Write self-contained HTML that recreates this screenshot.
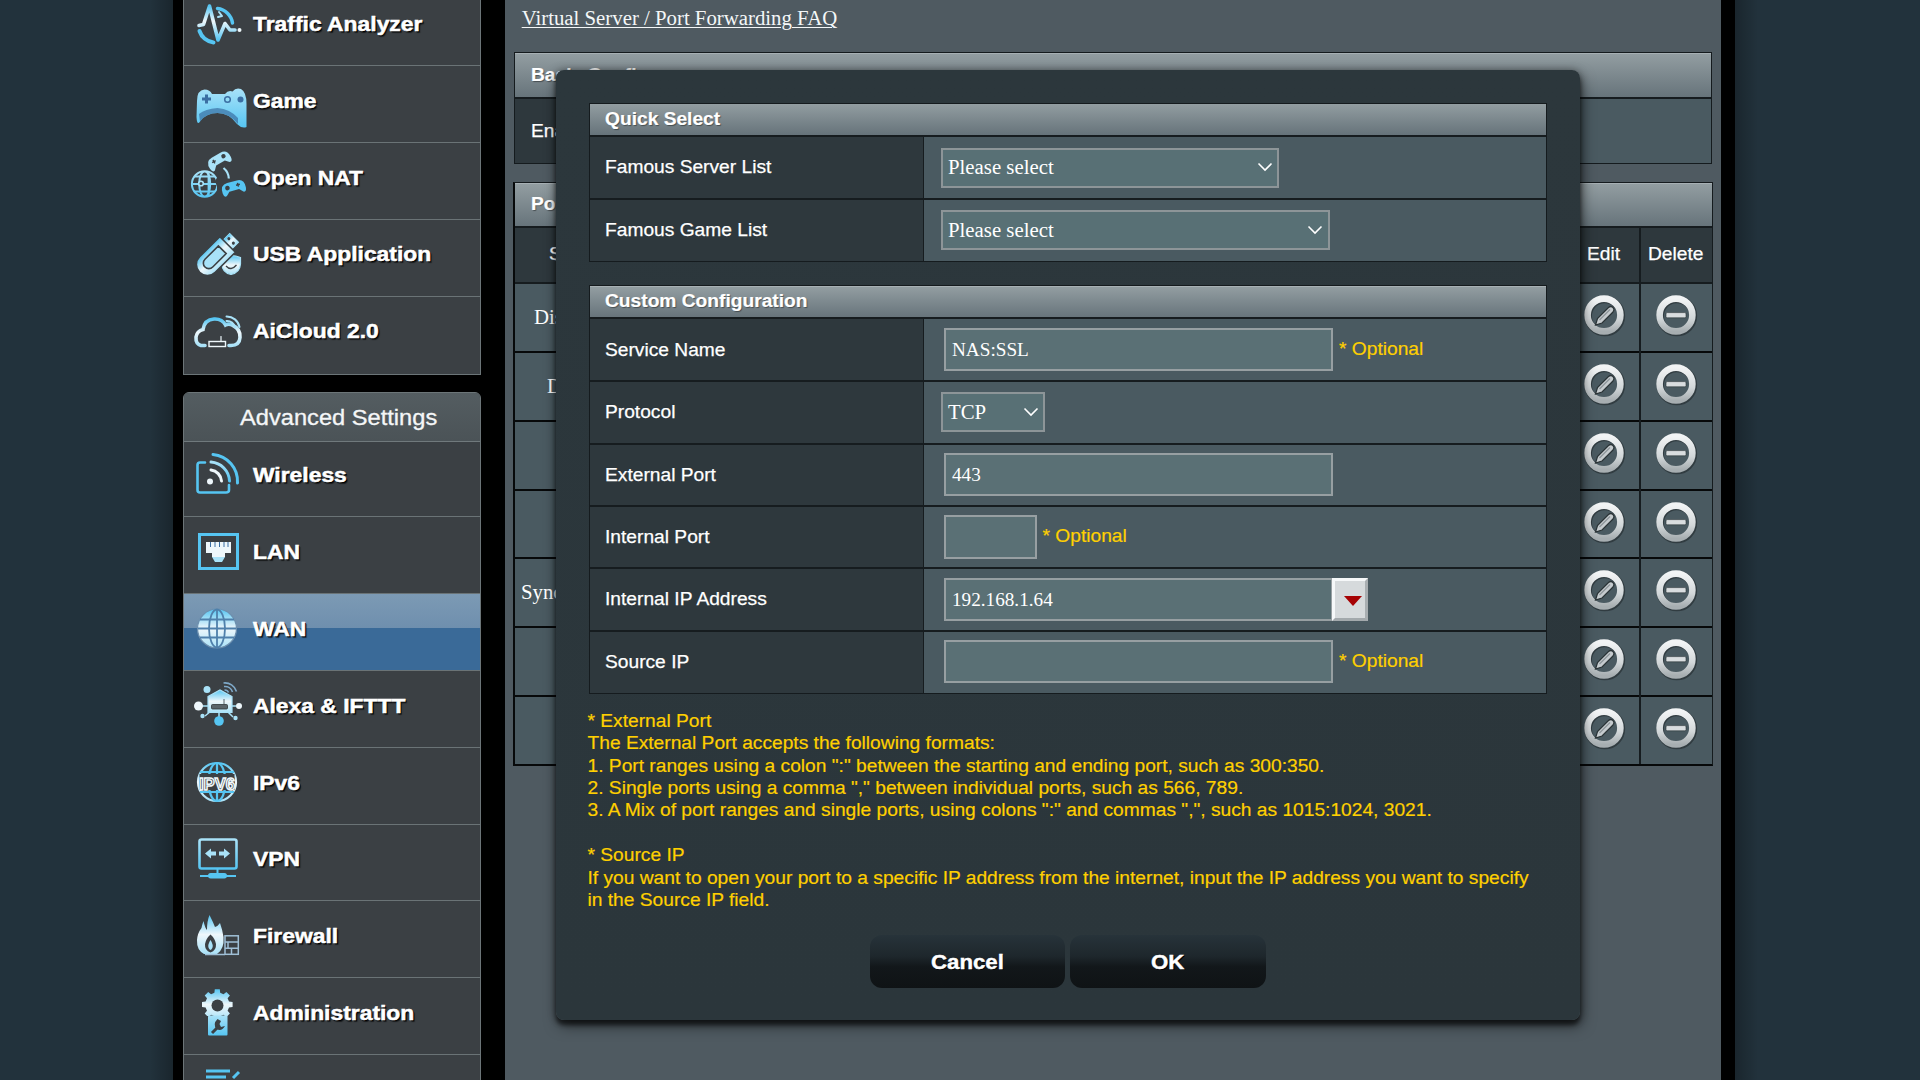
<!DOCTYPE html>
<html><head><meta charset="utf-8"><style>
*{margin:0;padding:0;box-sizing:border-box}
html,body{width:1920px;height:1080px;overflow:hidden}
body{background:#22323c;font-family:"Liberation Sans",sans-serif;position:relative}
.a{position:absolute}
.menu{background:#3b4044;border:1px solid #6c7578}
.sep{position:absolute;left:0;width:296px;height:1px;background:#6a7376}
.mt{position:absolute;left:253px;font-weight:bold;font-size:20.5px;line-height:22px;color:#fff;text-shadow:1px 1px 0 #000,1.5px 1.5px 1px rgba(0,0,0,.6);white-space:nowrap;transform-origin:0 50%;transform:scaleX(1.115);-webkit-text-stroke:0.5px #fff}
.ic{position:absolute;left:8px;width:54px;height:54px}
.hdr{position:absolute;background:linear-gradient(#929da1,#66737a);border-top:1px solid #a7b0b4}
.ht{position:absolute;font-weight:bold;font-size:19.2px;line-height:22px;color:#fff;text-shadow:1px 1px 1px rgba(0,0,0,.4);white-space:nowrap;-webkit-text-stroke:0.2px #fff}
.dk{position:absolute;background:#2e383d}
.lt{position:absolute;background:#4a5a61}
.ln{position:absolute;background:#161c1f}
.lbl{position:absolute;font-size:19.2px;line-height:22px;color:#fff;white-space:nowrap;-webkit-text-stroke:0.25px #fff}
.ser{position:absolute;font-family:"Liberation Serif",serif;font-size:20.8px;line-height:24px;color:#fff;white-space:nowrap}
.box{position:absolute;background:#5a7075;border:2px solid #979fa2}
.opt{position:absolute;color:#ffd000;font-size:19.2px;line-height:22px;white-space:nowrap;-webkit-text-stroke:0.2px #ffd000}
.btn{position:absolute;top:935px;width:195.5px;height:53px;border-radius:12px;background:linear-gradient(#27333a,#1e272c 40%,#12171a 60%,#0f1315);color:#fff;font-weight:bold;font-size:21px;text-align:center;line-height:54.5px;text-shadow:1px 1px 0 #000;-webkit-text-stroke:0.4px #fff}
.btn span{display:inline-block;transform:scaleX(1.06)}
.help{position:absolute;color:#ffd000;font-size:19.2px;line-height:22.4px;white-space:nowrap;-webkit-text-stroke:0.2px #ffd000}
.chev{position:absolute;width:16px;height:10px}
</style></head><body>
<div class="a" style="left:150px;top:0;width:23px;height:1080px;background:linear-gradient(90deg,rgba(0,0,0,0),rgba(0,0,0,.25))"></div>
<div class="a" style="left:1735px;top:0;width:23px;height:1080px;background:linear-gradient(90deg,rgba(0,0,0,.25),rgba(0,0,0,0))"></div>
<div class="a" style="left:173px;top:0;width:1562px;height:1080px;background:#000"></div>
<div class="a menu" style="left:183px;top:-12px;width:298px;height:387px;border-top:none"></div>
<div class="sep" style="left:184px;top:65.1px"></div>
<div class="sep" style="left:184px;top:141.9px"></div>
<div class="sep" style="left:184px;top:218.7px"></div>
<div class="sep" style="left:184px;top:295.5px"></div>
<span class="mt" style="top:13.0px">Traffic Analyzer</span>
<span class="mt" style="top:89.8px">Game</span>
<span class="mt" style="top:166.6px">Open NAT</span>
<span class="mt" style="top:243.4px">USB Application</span>
<span class="mt" style="top:320.2px">AiCloud 2.0</span>
<div class="a menu" style="left:183px;top:391.5px;width:298px;height:720px;border-radius:6px 6px 0 0;overflow:hidden">
<div class="a" style="left:0;top:0;width:296px;height:48px;background:linear-gradient(#545d61,#4b5357)"></div>
<div class="a" style="left:0;top:48px;width:296px;height:1px;background:#70797c"></div>
<span class="a" style="left:56.2px;top:13.6px;font-size:21.5px;line-height:24px;color:#f4f6f7;white-space:nowrap;transform-origin:0 50%;transform:scaleX(1.1);-webkit-text-stroke:0.3px #f4f6f7">Advanced Settings</span>
</div>
<span class="mt" style="top:464.3px">Wireless</span>
<div class="sep" style="left:184px;top:516.3px"></div>
<span class="mt" style="top:541.1px">LAN</span>
<div class="a" style="left:184px;top:594.1px;width:296px;height:76.3px;background:linear-gradient(#7c9ab4,#6f8fae 45%,#3a6a98 45%,#3a6a98)"></div>
<div class="sep" style="left:184px;top:593.1px"></div>
<span class="mt" style="top:617.9px">WAN</span>
<div class="sep" style="left:184px;top:669.9px"></div>
<span class="mt" style="top:694.7px">Alexa &amp; IFTTT</span>
<div class="sep" style="left:184px;top:746.7px"></div>
<span class="mt" style="top:771.5px">IPv6</span>
<div class="sep" style="left:184px;top:823.5px"></div>
<span class="mt" style="top:848.3px">VPN</span>
<div class="sep" style="left:184px;top:900.3px"></div>
<span class="mt" style="top:925.1px">Firewall</span>
<div class="sep" style="left:184px;top:977.1px"></div>
<span class="mt" style="top:1001.9px">Administration</span>
<div class="sep" style="left:184px;top:1053.9px"></div>
<svg class="a" style="left:0;top:0;pointer-events:none" width="490" height="1080" viewBox="0 0 490 1080"><defs><linearGradient id="gw" x1="0" y1="0" x2="0" y2="1"><stop offset="0" stop-color="#56c5f2"/><stop offset=".45" stop-color="#eef7fb"/><stop offset="1" stop-color="#56c5f2"/></linearGradient><linearGradient id="gb" x1="0" y1="0" x2="0" y2="1"><stop offset="0" stop-color="#a9e2f8"/><stop offset="1" stop-color="#56c5f2"/></linearGradient><linearGradient id="gt" x1="0" y1="0" x2="0" y2="1"><stop offset="0" stop-color="#56c5f2"/><stop offset=".5" stop-color="#eef7fb"/><stop offset="1" stop-color="#a9e2f8"/></linearGradient></defs><g fill="none" stroke-linecap="round" stroke-linejoin="round"><path d="M217.5 8.5 A17 17 0 0 1 232.5 23" stroke="#56c5f2" stroke-width="3.5"/><path d="M219 12 L222 16 L218 17" stroke="#a9e2f8" stroke-width="2"/><path d="M199.5 31 A17 17 0 0 0 213.5 42.5" stroke="#56c5f2" stroke-width="4"/><path d="M199 25.5 L203.5 24.5 L209.5 6 L218 40 L225 23.5 L230 30 L235 30" stroke="url(#gw)" stroke-width="3.6"/><circle cx="239.5" cy="30" r="2" fill="#eef7fb" stroke="none"/></g><path d="M197 101 Q197 90 204.5 89.5 Q210 89.5 212 94 L225 94 Q228 90 232.5 91.5 Q236 87 241 89 Q246.5 92 246.5 104 L246.5 127 Q242 129 237 124 Q229 113 217.5 113 Q206 113 200 121.5 Q197 126 196.5 117 Z" fill="url(#gb)"/><path d="M199 114 Q205 109 217.5 108 Q230 109 238 118 L238 124 Q229 113 217.5 113 Q206 113 200 121.5 Z" fill="#3b6fa3" opacity=".7"/><path d="M202 97.5 h3 v-3 h3 v3 h3 v3 h-3 v3 h-3 v-3 h-3 Z" fill="#3b6fa3"/><circle cx="227.5" cy="99.5" r="2.8" fill="none" stroke="#3b6fa3" stroke-width="1.5"/><circle cx="240.5" cy="99.5" r="3" fill="#3b6fa3"/><clipPath id="gclip2"><path d="M185 165 H217.5 V177 Q214 181 217 186 V205 H185 Z"/></clipPath><g fill="none" stroke="url(#gb)" stroke-width="2" clip-path="url(#gclip2)"><circle cx="204.7" cy="184" r="12.8"/><g clip-path="url(#gcirc)"><ellipse cx="204.7" cy="184" rx="5.5" ry="12.8"/><path d="M192 176.5 H217 M192 184 H217 M192 191.5 H217 M208.6 171 V197"/></g></g><clipPath id="gcirc"><circle cx="204.7" cy="184" r="12.5"/></clipPath><circle cx="201" cy="183.5" r="2.3" fill="#3b4044" stroke="#a9e2f8" stroke-width="1.6"/><path d="M223.5 168 Q228.5 172 228.8 178.5" stroke="#a9e2f8" stroke-width="2.2" fill="none"/><g transform="translate(219 160.5) rotate(-30)"><path d="M-12 3 Q-12.5 -6 -5 -6 L5 -6 Q12.5 -6 12 3 Q11.5 8 8.5 6.5 L5 3 L-5 3 L-8.5 6.5 Q-11.5 8 -12 3 Z" fill="#a9e2f8"/><circle cx="6" cy="-1.5" r="2.2" fill="#3b4044"/><path d="M-7 -1.5 h4 M-5 -3.5 v4" stroke="#3b4044" stroke-width="1.4"/></g><g transform="translate(233.5 187.5) rotate(-15)"><path d="M-12 3 Q-12.5 -6 -5 -6 L5 -6 Q12.5 -6 12 3 Q11.5 8 8.5 6.5 L5 3 L-5 3 L-8.5 6.5 Q-11.5 8 -12 3 Z" fill="#56c5f2"/><circle cx="-6" cy="-1" r="2.3" fill="#3b4044"/><path d="M3 -1.5 h4 M5 -3.5 v4" stroke="#3b4044" stroke-width="1.4"/></g><path d="M222 257.5 Q231 253.5 240.5 257.5 L240.5 264 Q240 272.5 231 274.5 Q222 272.5 222 264 Z" fill="url(#gt)" stroke="#a9e2f8" stroke-width="1.2"/><path d="M226 266 Q231 271.5 236.5 265" stroke="#3b4044" stroke-width="1.3" fill="none"/><g transform="translate(-1.5 1.5) rotate(-45 216 256)"><rect x="233" y="248.5" width="12" height="15" fill="#a9e2f8" stroke="#3b4044" stroke-width="1.5"/><rect x="234.2" y="249.7" width="9.6" height="12.6" fill="url(#gt)"/><circle cx="239.5" cy="252.8" r="1.5" fill="#3b4044"/><circle cx="239.5" cy="259.2" r="1.5" fill="#3b4044"/><path d="M206 245 H234.5 V267 H206 A11 11 0 0 1 206 245 Z" fill="url(#gt)" stroke="#3b4044" stroke-width="1.5"/><path d="M208 250.5 H227 V261.5 H208 A5.5 5.5 0 0 1 208 250.5 Z" fill="#a9e2f8" stroke="#3b4044" stroke-width="1.6"/></g><g fill="none" stroke-linecap="round"><path d="M205 345.5 L201 345.5 Q195.5 344 196 337 Q197 331 203 329.5 Q204.5 319.5 214 319 Q222 318.5 225.5 325 Q229 323 233 325.5 Q240.5 329 240 337.5 Q239.5 345.5 231 345.5 L229 345.5" stroke="url(#gt)" stroke-width="3.6"/><path d="M226.5 316.5 A13 13 0 0 1 239.5 327" stroke="#a9e2f8" stroke-width="2"/><path d="M226.5 321 A8 8 0 0 1 235 327.5" stroke="#a9e2f8" stroke-width="2"/><rect x="209" y="341.5" width="16.5" height="5" stroke="#eef7fb" stroke-width="1.4"/><path d="M221 336.5 V341" stroke="#eef7fb" stroke-width="1.2"/></g><g fill="none" stroke-linecap="round"><path d="M205 462.5 H200 Q197.5 462.5 197.5 465 V490 Q197.5 492.5 200 492.5 H226 Q229 492.5 229 490 V485" stroke="#56c5f2" stroke-width="2.6"/><path d="M211 470 A12 12 0 0 1 221.5 481" stroke="#eef7fb" stroke-width="3"/><path d="M211 462 A20 20 0 0 1 229.5 481" stroke="url(#gb)" stroke-width="3"/><path d="M213 454.5 A27 27 0 0 1 237.5 483" stroke="#56c5f2" stroke-width="3"/><circle cx="210" cy="481.5" r="3" fill="#eef7fb" stroke="none"/></g><rect x="199.5" y="534.5" width="38" height="34" fill="none" stroke="#56c5f2" stroke-width="3"/><path d="M206 542 H231 V553 L225 553 V557 L212 557 V553 L206 553 Z" fill="#eef7fb"/><path d="M210.5 542 V547 M215 542 V547 M219.5 542 V547 M224 542 V547 M228 542 V547" stroke="#3b6fa3" stroke-width="1"/><path d="M212 557 H225 L222 562 H215 Z" fill="#a9e2f8"/><circle cx="217" cy="628.5" r="19.5" fill="url(#gt)" stroke="#6d8fae" stroke-width="1.2"/><g fill="none" stroke="#4f80ab" stroke-width="1.8"><ellipse cx="217" cy="628.5" rx="8" ry="19"/><path d="M198 628.5 H236 M200 619.5 H234 M200 637.5 H234 M217 609.5 V647.5"/></g><g stroke="#a9e2f8" stroke-width="1.5" fill="none"><path d="M202 706 H210 M228 706 H236 M205 716 L211 711 M233 717 L227 711 M219 712 V718"/></g><path d="M208 696.5 L220 690 L232 696.5 V712.5 H208 Z" fill="url(#gt)" stroke="#a9e2f8" stroke-width="1.2"/><rect x="211.5" y="704.5" width="16" height="4.5" rx="1" fill="#59646a" stroke="#2f3538" stroke-width=".8"/><path d="M224 699 V704" stroke="#59646a" stroke-width="1"/><circle cx="198.5" cy="706" r="4.5" fill="#eef7fb"/><circle cx="239" cy="706" r="3" fill="#eef7fb"/><circle cx="219" cy="721" r="4.8" fill="#56c5f2"/><circle cx="202.5" cy="716" r="2.2" fill="#a9e2f8"/><circle cx="235.5" cy="718" r="2.2" fill="#a9e2f8"/><circle cx="207" cy="689.5" r="3.5" fill="#a9e2f8"/><path d="M223.5 683 A12 12 0 0 1 236.5 691.5 M224 686.5 A8 8 0 0 1 232.5 692 M224.5 690 A4 4 0 0 1 228.5 692.5" stroke="#7fa9c9" stroke-width="1.6" fill="none"/><g fill="none" stroke-width="2.2"><circle cx="217" cy="782" r="19" stroke="url(#gt)"/><ellipse cx="217" cy="782" rx="8.5" ry="19" stroke="#56c5f2"/><path d="M217 763 V801 M200 772 H234 M200 792 H234" stroke="#56c5f2"/></g><rect x="199.5" y="774" width="35" height="16" fill="#3b4044"/><text x="217" y="789.5" text-anchor="middle" font-family="Liberation Sans" font-weight="bold" font-size="17" fill="#3b4044" stroke="#eef7fb" stroke-width="1.5" textLength="36" lengthAdjust="spacingAndGlyphs">IPV6</text><rect x="199.5" y="839.5" width="37" height="29" rx="2" fill="none" stroke="url(#gb)" stroke-width="2.6"/><path d="M205 853.5 L211 848.5 V851.5 H216 V855.5 H211 V858.5 Z M230 853.5 L224 848.5 V851.5 H219 V855.5 H224 V858.5 Z" fill="#a9e2f8"/><path d="M217.5 869 V875" stroke="#56c5f2" stroke-width="2"/><path d="M200 876 H236" stroke="#56c5f2" stroke-width="2.2"/><rect x="208" y="873" width="19" height="5.5" rx="2.7" fill="#56c5f2"/><path d="M204 954 Q196.5 950 197 940 Q197.5 933 201.5 928 Q202 925 203.5 921 Q205 928 207 930 Q207 921 209.5 915 Q213 922 215 927 Q218 926 220 923 Q222.5 930 223.5 937 Q224.5 949 217 954 Z" fill="url(#gt)"/><path d="M210.5 952.5 Q204.5 950.5 205 944 Q206 938.5 210.5 934.5 Q215 938.5 216 944 Q216.5 950.5 210.5 952.5 Z" fill="#3b4044"/><path d="M210.5 950 Q208 948.5 208.3 945 Q209 942 210.5 940 Q212 942 212.7 945 Q213 948.5 210.5 950 Z" fill="#a9e2f8"/><rect x="224.5" y="935.5" width="14" height="19" fill="#3b4044"/><g fill="none" stroke="#9fbfd6" stroke-width="1.5"><rect x="225" y="935.8" width="13.3" height="18.5"/><path d="M225 942 H238.3 M225 948.3 H238.3 M205 954.5 H225 M228 942 V948.3 M231.5 948.3 V954.3"/></g><clipPath id="gclip"><rect x="195" y="985" width="45" height="31"/></clipPath><path d="M214.4 992.8 L214.8 989.2 L219.8 989.2 L220.2 992.8 L223.5 994.2 L226.4 991.9 L229.9 995.4 L227.6 998.3 L229.0 1001.6 L232.6 1002.0 L232.6 1007.0 L229.0 1007.4 L227.6 1010.7 L229.9 1013.6 L226.4 1017.1 L223.5 1014.8 L220.2 1016.2 L219.8 1019.8 L214.8 1019.8 L214.4 1016.2 L211.1 1014.8 L208.2 1017.1 L204.7 1013.6 L207.0 1010.7 L205.6 1007.4 L202.0 1007.0 L202.0 1002.0 L205.6 1001.6 L207.0 998.3 L204.7 995.4 L208.2 991.9 L211.1 994.2 Z" fill="url(#gt)" clip-path="url(#gclip)"/><circle cx="217.5" cy="1005.5" r="6" fill="#3b4044"/><rect x="208" y="1015.5" width="19.5" height="20" rx="1" fill="url(#gb)"/><path d="M212 1033 L219 1026" stroke="#3b4044" stroke-width="3" fill="none"/><path d="M217.5 1019 Q212.5 1024 216.5 1029 Q221.5 1032 225 1026 L221 1027 L219.5 1024 L221 1021 Z" fill="#3b4044"/><path d="M206 1071 H230 M206 1077 H226 M233 1078 L239 1072" stroke="#56c5f2" stroke-width="3"/></svg>
<div class="a" style="left:505px;top:0;width:1216px;height:1080px;background:#4f5a61"></div>
<div class="a" style="left:521.7px;top:6px;font-family:'Liberation Serif',serif;font-size:20.8px;line-height:24px;color:#f4f7f8;text-decoration:underline;text-decoration-thickness:1.3px;text-underline-offset:1.5px;white-space:nowrap">Virtual Server / Port Forwarding FAQ</div>
<div class="dk" style="left:514px;top:52px;width:1198px;height:112px;background:#4a5a61"></div>
<div class="dk" style="left:514px;top:98px;width:410px;height:66px"></div>
<div class="hdr" style="left:514px;top:52.5px;width:1198px;height:45.5px"></div>
<div class="ln" style="left:514px;top:97px;width:1198px;height:2px"></div>
<span class="ht" style="left:531px;top:64px">Basic Config</span>
<span class="lbl" style="left:531px;top:120px">Enable Port Forwarding</span>
<div class="a" style="left:514px;top:52px;width:1198px;height:112px;border:1px solid #151b1e"></div>
<div class="lt" style="left:514px;top:182px;width:1198px;height:582px"></div>
<div class="hdr" style="left:514px;top:182.5px;width:1198px;height:44.5px"></div>
<div class="dk" style="left:514px;top:227px;width:1198px;height:56px"></div>
<span class="ht" style="left:531px;top:193px">Port Forwarding List</span>
<div class="ln" style="left:514px;top:226px;width:1198px;height:2px"></div>
<span class="lbl" style="left:1587px;top:243px">Edit</span>
<span class="lbl" style="left:1648px;top:243px">Delete</span>
<span class="lbl" style="left:549px;top:243px">Service Name</span>
<div class="ln" style="left:514px;top:282px;width:1198px;height:2px"></div>
<div class="ln" style="left:514px;top:351.0px;width:1198px;height:2px;background:#07090a"></div>
<div class="ln" style="left:514px;top:419.8px;width:1198px;height:2px;background:#07090a"></div>
<div class="ln" style="left:514px;top:488.6px;width:1198px;height:2px;background:#07090a"></div>
<div class="ln" style="left:514px;top:557.4px;width:1198px;height:2px;background:#07090a"></div>
<div class="ln" style="left:514px;top:626.2px;width:1198px;height:2px;background:#07090a"></div>
<div class="ln" style="left:514px;top:695.0px;width:1198px;height:2px;background:#07090a"></div>
<div class="ln" style="left:1639px;top:227px;width:1.5px;height:537px"></div>
<div class="ln" style="left:1569px;top:227px;width:1.5px;height:537px"></div>
<svg width="0" height="0" style="position:absolute"><defs><linearGradient id="rg" x1="0" y1="0" x2="0" y2="1"><stop offset="0" stop-color="#f2f4f5"/><stop offset=".6" stop-color="#d3d8da"/><stop offset="1" stop-color="#a7aeb1"/></linearGradient></defs></svg>
<svg class="a" style="left:1580px;top:291.1px" width="50" height="50" viewBox="0 0 50 50"><circle cx="24.8" cy="25" r="16.6" fill="none" stroke="#1d2528" stroke-opacity=".55" stroke-width="7.5"/><circle cx="24" cy="24" r="16.4" fill="none" stroke="url(#rg)" stroke-width="6.6"/><path d="M15.5 34 L17.5 27.5 L28.5 16.5 Q31 14.5 33 16.5 Q35 18.5 33 21 L22 32 Z" fill="#c5cbce" stroke="#2a3336" stroke-width="1.2"/><path d="M19.5 29 L30 18.5" stroke="#8d9599" stroke-width="1.2"/></svg>
<svg class="a" style="left:1651.6px;top:291.1px" width="50" height="50" viewBox="0 0 50 50"><circle cx="24.8" cy="25" r="16.6" fill="none" stroke="#1d2528" stroke-opacity=".55" stroke-width="7.5"/><circle cx="24" cy="24" r="16.4" fill="none" stroke="url(#rg)" stroke-width="6.6"/><rect x="14" y="21.6" width="20" height="5.2" rx="1.2" fill="#d9dddf" stroke="#2a3336" stroke-width=".6"/></svg>
<svg class="a" style="left:1580px;top:359.9px" width="50" height="50" viewBox="0 0 50 50"><circle cx="24.8" cy="25" r="16.6" fill="none" stroke="#1d2528" stroke-opacity=".55" stroke-width="7.5"/><circle cx="24" cy="24" r="16.4" fill="none" stroke="url(#rg)" stroke-width="6.6"/><path d="M15.5 34 L17.5 27.5 L28.5 16.5 Q31 14.5 33 16.5 Q35 18.5 33 21 L22 32 Z" fill="#c5cbce" stroke="#2a3336" stroke-width="1.2"/><path d="M19.5 29 L30 18.5" stroke="#8d9599" stroke-width="1.2"/></svg>
<svg class="a" style="left:1651.6px;top:359.9px" width="50" height="50" viewBox="0 0 50 50"><circle cx="24.8" cy="25" r="16.6" fill="none" stroke="#1d2528" stroke-opacity=".55" stroke-width="7.5"/><circle cx="24" cy="24" r="16.4" fill="none" stroke="url(#rg)" stroke-width="6.6"/><rect x="14" y="21.6" width="20" height="5.2" rx="1.2" fill="#d9dddf" stroke="#2a3336" stroke-width=".6"/></svg>
<svg class="a" style="left:1580px;top:428.7px" width="50" height="50" viewBox="0 0 50 50"><circle cx="24.8" cy="25" r="16.6" fill="none" stroke="#1d2528" stroke-opacity=".55" stroke-width="7.5"/><circle cx="24" cy="24" r="16.4" fill="none" stroke="url(#rg)" stroke-width="6.6"/><path d="M15.5 34 L17.5 27.5 L28.5 16.5 Q31 14.5 33 16.5 Q35 18.5 33 21 L22 32 Z" fill="#c5cbce" stroke="#2a3336" stroke-width="1.2"/><path d="M19.5 29 L30 18.5" stroke="#8d9599" stroke-width="1.2"/></svg>
<svg class="a" style="left:1651.6px;top:428.7px" width="50" height="50" viewBox="0 0 50 50"><circle cx="24.8" cy="25" r="16.6" fill="none" stroke="#1d2528" stroke-opacity=".55" stroke-width="7.5"/><circle cx="24" cy="24" r="16.4" fill="none" stroke="url(#rg)" stroke-width="6.6"/><rect x="14" y="21.6" width="20" height="5.2" rx="1.2" fill="#d9dddf" stroke="#2a3336" stroke-width=".6"/></svg>
<svg class="a" style="left:1580px;top:497.5px" width="50" height="50" viewBox="0 0 50 50"><circle cx="24.8" cy="25" r="16.6" fill="none" stroke="#1d2528" stroke-opacity=".55" stroke-width="7.5"/><circle cx="24" cy="24" r="16.4" fill="none" stroke="url(#rg)" stroke-width="6.6"/><path d="M15.5 34 L17.5 27.5 L28.5 16.5 Q31 14.5 33 16.5 Q35 18.5 33 21 L22 32 Z" fill="#c5cbce" stroke="#2a3336" stroke-width="1.2"/><path d="M19.5 29 L30 18.5" stroke="#8d9599" stroke-width="1.2"/></svg>
<svg class="a" style="left:1651.6px;top:497.5px" width="50" height="50" viewBox="0 0 50 50"><circle cx="24.8" cy="25" r="16.6" fill="none" stroke="#1d2528" stroke-opacity=".55" stroke-width="7.5"/><circle cx="24" cy="24" r="16.4" fill="none" stroke="url(#rg)" stroke-width="6.6"/><rect x="14" y="21.6" width="20" height="5.2" rx="1.2" fill="#d9dddf" stroke="#2a3336" stroke-width=".6"/></svg>
<svg class="a" style="left:1580px;top:566.3px" width="50" height="50" viewBox="0 0 50 50"><circle cx="24.8" cy="25" r="16.6" fill="none" stroke="#1d2528" stroke-opacity=".55" stroke-width="7.5"/><circle cx="24" cy="24" r="16.4" fill="none" stroke="url(#rg)" stroke-width="6.6"/><path d="M15.5 34 L17.5 27.5 L28.5 16.5 Q31 14.5 33 16.5 Q35 18.5 33 21 L22 32 Z" fill="#c5cbce" stroke="#2a3336" stroke-width="1.2"/><path d="M19.5 29 L30 18.5" stroke="#8d9599" stroke-width="1.2"/></svg>
<svg class="a" style="left:1651.6px;top:566.3px" width="50" height="50" viewBox="0 0 50 50"><circle cx="24.8" cy="25" r="16.6" fill="none" stroke="#1d2528" stroke-opacity=".55" stroke-width="7.5"/><circle cx="24" cy="24" r="16.4" fill="none" stroke="url(#rg)" stroke-width="6.6"/><rect x="14" y="21.6" width="20" height="5.2" rx="1.2" fill="#d9dddf" stroke="#2a3336" stroke-width=".6"/></svg>
<svg class="a" style="left:1580px;top:635.1px" width="50" height="50" viewBox="0 0 50 50"><circle cx="24.8" cy="25" r="16.6" fill="none" stroke="#1d2528" stroke-opacity=".55" stroke-width="7.5"/><circle cx="24" cy="24" r="16.4" fill="none" stroke="url(#rg)" stroke-width="6.6"/><path d="M15.5 34 L17.5 27.5 L28.5 16.5 Q31 14.5 33 16.5 Q35 18.5 33 21 L22 32 Z" fill="#c5cbce" stroke="#2a3336" stroke-width="1.2"/><path d="M19.5 29 L30 18.5" stroke="#8d9599" stroke-width="1.2"/></svg>
<svg class="a" style="left:1651.6px;top:635.1px" width="50" height="50" viewBox="0 0 50 50"><circle cx="24.8" cy="25" r="16.6" fill="none" stroke="#1d2528" stroke-opacity=".55" stroke-width="7.5"/><circle cx="24" cy="24" r="16.4" fill="none" stroke="url(#rg)" stroke-width="6.6"/><rect x="14" y="21.6" width="20" height="5.2" rx="1.2" fill="#d9dddf" stroke="#2a3336" stroke-width=".6"/></svg>
<svg class="a" style="left:1580px;top:703.9px" width="50" height="50" viewBox="0 0 50 50"><circle cx="24.8" cy="25" r="16.6" fill="none" stroke="#1d2528" stroke-opacity=".55" stroke-width="7.5"/><circle cx="24" cy="24" r="16.4" fill="none" stroke="url(#rg)" stroke-width="6.6"/><path d="M15.5 34 L17.5 27.5 L28.5 16.5 Q31 14.5 33 16.5 Q35 18.5 33 21 L22 32 Z" fill="#c5cbce" stroke="#2a3336" stroke-width="1.2"/><path d="M19.5 29 L30 18.5" stroke="#8d9599" stroke-width="1.2"/></svg>
<svg class="a" style="left:1651.6px;top:703.9px" width="50" height="50" viewBox="0 0 50 50"><circle cx="24.8" cy="25" r="16.6" fill="none" stroke="#1d2528" stroke-opacity=".55" stroke-width="7.5"/><circle cx="24" cy="24" r="16.4" fill="none" stroke="url(#rg)" stroke-width="6.6"/><rect x="14" y="21.6" width="20" height="5.2" rx="1.2" fill="#d9dddf" stroke="#2a3336" stroke-width=".6"/></svg>
<span class="ser" style="left:534px;top:305.0px">Dis</span>
<span class="ser" style="left:547px;top:373.8px">D</span>
<span class="ser" style="left:521px;top:580.2px">Sync</span>
<div class="a" style="left:513px;top:181.5px;width:1199.5px;height:584px;border:1px solid #151b1e;border-left:2px solid #07090a;border-bottom:2px solid #07090a"></div>
<div class="a" style="left:556px;top:70px;width:1024px;height:950px;background:linear-gradient(#2c373c,#2b363b);border-radius:8px;box-shadow:0 5px 4px rgba(0,0,0,.55),2px 6px 14px rgba(0,0,0,.5),0 0 8px rgba(0,0,0,.35)"></div>
<div class="hdr" style="left:589px;top:103.3px;width:957px;height:32px"></div>
<span class="ht" style="left:605px;top:107.8px">Quick Select</span>
<div class="dk" style="left:589px;top:136.3px;width:335px;height:124.8px"></div>
<div class="lt" style="left:924px;top:136.3px;width:622px;height:124.8px"></div>
<div class="ln" style="left:589px;top:134.8px;width:957px;height:2px"></div>
<div class="ln" style="left:589px;top:197.7px;width:957px;height:2px"></div>
<div class="ln" style="left:922.5px;top:136.3px;width:1.5px;height:124.8px"></div>
<div class="a" style="left:588.5px;top:102.8px;width:958px;height:158.8px;border:1px solid #151b1e"></div>
<span class="lbl" style="left:605px;top:156.3px">Famous Server List</span>
<span class="lbl" style="left:605px;top:218.7px">Famous Game List</span>
<div class="box" style="left:940.5px;top:147.5px;width:338.5px;height:40px;background:#587075;border-color:#8d9598"></div>
<span class="ser" style="left:948px;top:155px">Please select</span>
<svg class="chev" style="left:1257px;top:162px" viewBox="0 0 16 10"><path d="M1.5 1.5 L8 8 L14.5 1.5" fill="none" stroke="#fff" stroke-width="1.6"/></svg>
<div class="box" style="left:940.5px;top:210px;width:389px;height:40px;background:#587075;border-color:#8d9598"></div>
<span class="ser" style="left:948px;top:217.5px">Please select</span>
<svg class="chev" style="left:1307px;top:224.5px" viewBox="0 0 16 10"><path d="M1.5 1.5 L8 8 L14.5 1.5" fill="none" stroke="#fff" stroke-width="1.6"/></svg>
<div class="hdr" style="left:589px;top:285.8px;width:957px;height:32px"></div>
<span class="ht" style="left:605px;top:290.3px">Custom Configuration</span>
<div class="dk" style="left:589px;top:318.8px;width:335px;height:374.4px"></div>
<div class="lt" style="left:924px;top:318.8px;width:622px;height:374.4px"></div>
<div class="ln" style="left:589px;top:317.3px;width:957px;height:2px"></div>
<div class="ln" style="left:589px;top:380.2px;width:957px;height:2px"></div>
<div class="ln" style="left:589px;top:442.6px;width:957px;height:2px"></div>
<div class="ln" style="left:589px;top:505.0px;width:957px;height:2px"></div>
<div class="ln" style="left:589px;top:567.4px;width:957px;height:2px"></div>
<div class="ln" style="left:589px;top:629.8px;width:957px;height:2px"></div>
<div class="ln" style="left:922.5px;top:318.8px;width:1.5px;height:374.4px"></div>
<div class="a" style="left:588.5px;top:285.3px;width:958px;height:408.4px;border:1px solid #151b1e"></div>
<span class="lbl" style="left:605px;top:338.8px">Service Name</span>
<span class="lbl" style="left:605px;top:401.2px">Protocol</span>
<span class="lbl" style="left:605px;top:463.6px">External Port</span>
<span class="lbl" style="left:605px;top:526.0px">Internal Port</span>
<span class="lbl" style="left:605px;top:588.4px">Internal IP Address</span>
<span class="lbl" style="left:605px;top:650.8px">Source IP</span>
<div class="box" style="left:943.5px;top:328px;width:389.5px;height:43px"></div>
<span class="ser" style="left:952px;top:337.5px;font-size:19.2px">NAS:SSL</span>
<span class="opt" style="left:1339px;top:338px">* Optional</span>
<div class="box" style="left:940.5px;top:392px;width:104.5px;height:40px;background:#587075;border-color:#8d9598"></div>
<span class="ser" style="left:948px;top:400px">TCP</span>
<svg class="chev" style="left:1023px;top:407px" viewBox="0 0 16 10"><path d="M1.5 1.5 L8 8 L14.5 1.5" fill="none" stroke="#fff" stroke-width="1.6"/></svg>
<div class="box" style="left:943.5px;top:453px;width:389.5px;height:43px"></div>
<span class="ser" style="left:952px;top:462.5px;font-size:19.2px">443</span>
<div class="box" style="left:943.5px;top:515px;width:93px;height:43.5px"></div>
<span class="opt" style="left:1042.5px;top:525px">* Optional</span>
<div class="box" style="left:943.5px;top:578px;width:389.5px;height:43px"></div>
<span class="ser" style="left:952px;top:587.5px;font-size:19.2px">192.168.1.64</span>
<div class="a" style="left:1332px;top:578px;width:36px;height:43px;background:#d6dadc;border-style:solid;border-width:3px;border-color:#f6f8f9 #a8aeb1 #a3a9ac #f6f8f9"></div>
<svg class="a" style="left:1343px;top:595px" width="20" height="12" viewBox="0 0 20 12"><path d="M1 1 L19 1 L10 11 Z" fill="#a60204"/></svg>
<div class="box" style="left:943.5px;top:640px;width:389.5px;height:43px"></div>
<span class="opt" style="left:1339px;top:650px">* Optional</span>
<div class="help" style="left:587.5px;top:709.7px">* External Port<br>The External Port accepts the following formats:<br>1. Port ranges using a colon ":" between the starting and ending port, such as 300:350.<br>2. Single ports using a comma "," between individual ports, such as 566, 789.<br>3. A Mix of port ranges and single ports, using colons ":" and commas ",", such as 1015:1024, 3021.<br>&nbsp;<br>* Source IP<br>If you want to open your port to a specific IP address from the internet, input the IP address you want to specify<br>in the Source IP field.</div>
<div class="btn" style="left:869.5px"><span>Cancel</span></div>
<div class="btn" style="left:1070px"><span>OK</span></div>
</body></html>
